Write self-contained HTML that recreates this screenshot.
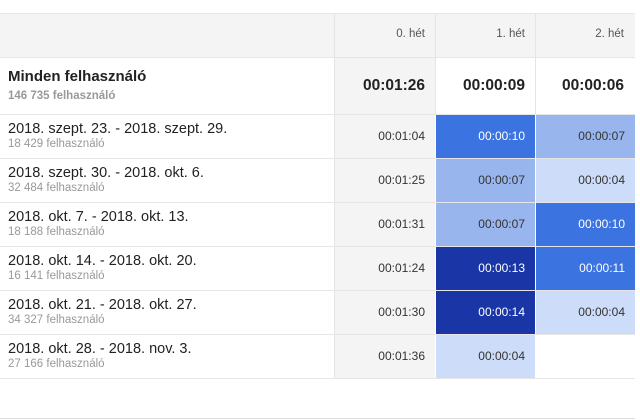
<!DOCTYPE html><html><head><style>
body{margin:0;width:640px;height:420px;background:#fff;font-family:"Liberation Sans",sans-serif;position:relative;overflow:hidden}
div{position:absolute;box-sizing:border-box}
.t{left:8px;font-size:14.5px;color:#222;white-space:nowrap}
.s{left:8px;font-size:11.5px;color:#999;white-space:nowrap}
.c{font-size:12px;color:#333;text-align:right;padding-right:10px;line-height:43px;height:43px}
.hl{left:0;width:635px;height:1px;background:#e6e6e6}
</style></head><body>
<div style="left:0;top:13px;width:635px;height:45px;background:#f4f4f4;border-top:1px solid #e8e8e8;border-bottom:1px solid #e6e6e6"></div>
<div style="left:334px;top:13px;width:1px;height:365px;background:#e4e4e4"></div>
<div style="left:435px;top:13px;width:1px;height:101px;background:#e4e4e4"></div>
<div style="left:535px;top:13px;width:1px;height:101px;background:#e4e4e4"></div>
<div style="left:335px;top:58px;width:100px;height:320px;background:#f4f4f4"></div>
<div style="left:334px;top:28px;width:91px;text-align:right;font-size:11.5px;color:#555">0. hét</div>
<div style="left:435px;top:28px;width:90px;text-align:right;font-size:11.5px;color:#555">1. hét</div>
<div style="left:535px;top:28px;width:89px;text-align:right;font-size:11.5px;color:#555">2. hét</div>
<div class="t" style="top:68px;font-weight:bold;font-size:15px">Minden felhasználó</div>
<div class="s" style="top:90px;font-weight:bold;color:#999">146 735 felhasználó</div>
<div style="left:334px;top:77px;width:91px;text-align:right;font-size:15.5px;font-weight:bold;color:#222">00:01:26</div>
<div style="left:435px;top:77px;width:90px;text-align:right;font-size:15.5px;font-weight:bold;color:#222">00:00:09</div>
<div style="left:535px;top:77px;width:89px;text-align:right;font-size:15.5px;font-weight:bold;color:#222">00:00:06</div>
<div class="hl" style="top:114px"></div><div class="hl" style="top:158px"></div><div class="hl" style="top:202px"></div><div class="hl" style="top:246px"></div><div class="hl" style="top:290px"></div><div class="hl" style="top:334px"></div><div class="hl" style="top:378px"></div>
<div class="hl" style="top:418px;background:#ddd"></div>

<div class="t" style="top:121px">2018. szept. 23. - 2018. szept. 29.</div><div class="s" style="top:138px">18 429 felhasználó</div>
<div class="t" style="top:165px">2018. szept. 30. - 2018. okt. 6.</div><div class="s" style="top:182px">32 484 felhasználó</div>
<div class="t" style="top:209px">2018. okt. 7. - 2018. okt. 13.</div><div class="s" style="top:226px">18 188 felhasználó</div>
<div class="t" style="top:253px">2018. okt. 14. - 2018. okt. 20.</div><div class="s" style="top:270px">16 141 felhasználó</div>
<div class="t" style="top:297px">2018. okt. 21. - 2018. okt. 27.</div><div class="s" style="top:314px">34 327 felhasználó</div>
<div class="t" style="top:341px">2018. okt. 28. - 2018. nov. 3.</div><div class="s" style="top:358px">27 166 felhasználó</div>

<div class="c" style="left:335px;top:115px;width:100px">00:01:04</div>
<div class="c" style="left:335px;top:159px;width:100px">00:01:25</div>
<div class="c" style="left:335px;top:203px;width:100px">00:01:31</div>
<div class="c" style="left:335px;top:247px;width:100px">00:01:24</div>
<div class="c" style="left:335px;top:291px;width:100px">00:01:30</div>
<div class="c" style="left:335px;top:335px;width:100px">00:01:36</div>

<div class="c" style="left:436px;top:115px;width:99px;background:#3b73e0;color:#fff">00:00:10</div>
<div class="c" style="left:436px;top:159px;width:99px;background:#98b5ee">00:00:07</div>
<div class="c" style="left:436px;top:203px;width:99px;background:#98b5ee">00:00:07</div>
<div class="c" style="left:436px;top:247px;width:99px;background:#1a36a6;color:#fff">00:00:13</div>
<div class="c" style="left:436px;top:291px;width:99px;background:#1a36a6;color:#fff">00:00:14</div>
<div class="c" style="left:436px;top:335px;width:99px;background:#cddcf8">00:00:04</div>

<div class="c" style="left:536px;top:115px;width:99px;background:#98b5ee">00:00:07</div>
<div class="c" style="left:536px;top:159px;width:99px;background:#cddcf8">00:00:04</div>
<div class="c" style="left:536px;top:203px;width:99px;background:#3b73e0;color:#fff">00:00:10</div>
<div class="c" style="left:536px;top:247px;width:99px;background:#3b73e0;color:#fff">00:00:11</div>
<div class="c" style="left:536px;top:291px;width:99px;background:#cddcf8">00:00:04</div>
</body></html>
